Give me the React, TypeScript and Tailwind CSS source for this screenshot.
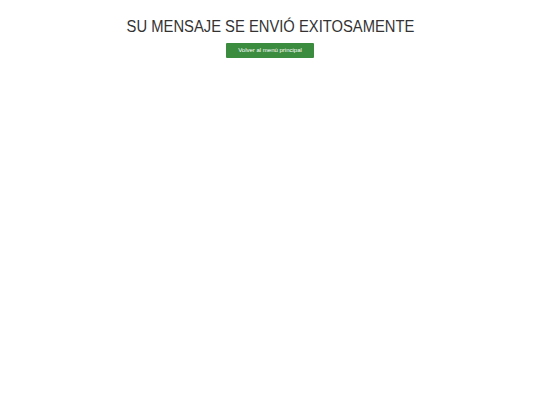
export default function App() {
  return (
    <div className="w-[540px] h-[405px] bg-white flex flex-col items-center" style={{ fontFamily: '"Liberation Sans", Arial, sans-serif' }}>
      <h1 className="mt-[17px] text-[16.8px] leading-[20px] text-[#333333] scale-x-[0.88] whitespace-nowrap">SU MENSAJE SE ENVIÓ EXITOSAMENTE</h1>
      <button className="mt-[6px] w-[88px] h-[15px] bg-[#3c8c3f] text-white text-[6px] leading-[15px] rounded-[1px]">Volver al menú principal</button>
    </div>
  );
}
